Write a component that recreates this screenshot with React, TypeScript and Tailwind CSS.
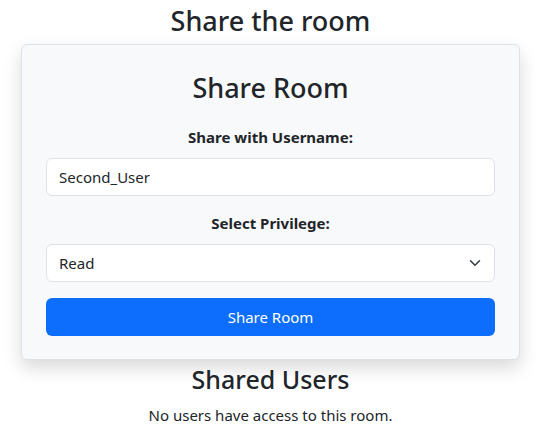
import { useState } from "react";

const font = { fontFamily: '"Noto Sans", "Open Sans", Arial, sans-serif' };

export default function App() {
  const [username, setUsername] = useState("Second_User");
  const [privilege, setPrivilege] = useState("Read");

  return (
    <div className="min-h-screen bg-white text-[#212529]" style={font}>
      <div className="pl-[21px] pr-[26px] pt-[5px] flex flex-col items-center">
        <h2 className="text-[27px] font-medium leading-[1.2] mb-[7px]">Share the room</h2>

        {/* Card */}
        <div className="w-full bg-[#f8f9fa] border border-[#dee2e6] rounded-[6px] shadow-[0_8px_18px_rgba(0,0,0,0.15)] px-[24px] pt-[27px] pb-[23px]">
          <h2 className="text-[27px] font-medium leading-[1.2] text-center mb-[21px]">Share Room</h2>

          <label className="block text-center font-bold text-[15px] mb-[10px]">Share with Username:</label>
          <input
            value={username}
            onChange={(e) => setUsername(e.target.value)}
            className="w-full h-[38px] bg-white border border-[#dee2e6] rounded-[6px] px-[12px] text-[15px] outline-none"
          />

          <label className="block text-center font-bold text-[15px] mt-[16px] mb-[9px]">Select Privilege:</label>
          <div className="relative">
            <select
              value={privilege}
              onChange={(e) => setPrivilege(e.target.value)}
              className="appearance-none w-full h-[38px] bg-white border border-[#dee2e6] rounded-[6px] px-[12px] text-[15px] outline-none"
            >
              <option>Read</option>
              <option>Write</option>
              <option>Admin</option>
            </select>
            <svg
              className="absolute right-[14px] top-[13px] pointer-events-none"
              width="12"
              height="12"
              viewBox="0 0 16 16"
              fill="none"
              stroke="#343a40"
              strokeWidth="2"
              strokeLinecap="round"
              strokeLinejoin="round"
            >
              <path d="m2 5 6 6 6-6" />
            </svg>
          </div>

          <button className="w-full h-[38px] mt-[16px] bg-[#0d6efd] text-white rounded-[6px] text-[15px]">
            Share Room
          </button>
        </div>

        <h3 className="text-[25px] font-medium leading-[1.2] mt-[4px] mb-[10px]">Shared Users</h3>
        <p className="text-[15px]">No users have access to this room.</p>
      </div>
    </div>
  );
}
